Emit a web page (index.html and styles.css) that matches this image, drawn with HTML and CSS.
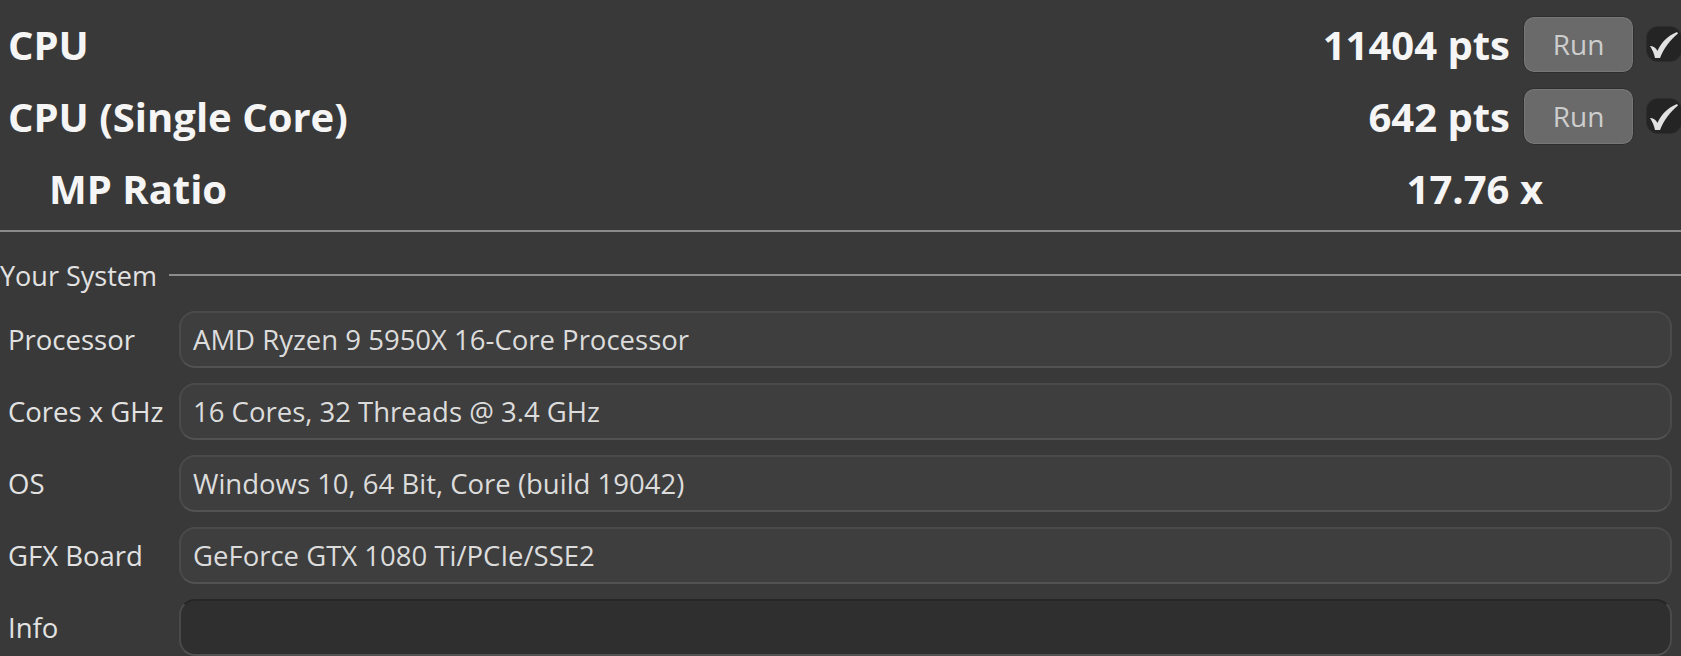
FILE: index.html
```html
<!DOCTYPE html>
<html>
<head>
<meta charset="utf-8">
<link rel="stylesheet" href="styles.css">
</head>
<body>
<div class="app">
  <section class="bench">
    <div class="row">
      <div class="title">CPU</div>
      <div class="score">11404 pts</div>
      <button class="run">Run</button>
      <div class="check"><svg viewBox="0 0 34 34" width="34" height="34"><path d="M3 19 C6 18.5 9 21 10.5 24 C14 16 20 9 30 5 L31 6.5 C23 13 17 21 13 31 L8 31 C7 26 5 22 3 19 Z" fill="#e2e2e2"/></svg></div>
    </div>
    <div class="row">
      <div class="title">CPU (Single Core)</div>
      <div class="score">642 pts</div>
      <button class="run">Run</button>
      <div class="check"><svg viewBox="0 0 34 34" width="34" height="34"><path d="M3 19 C6 18.5 9 21 10.5 24 C14 16 20 9 30 5 L31 6.5 C23 13 17 21 13 31 L8 31 C7 26 5 22 3 19 Z" fill="#e2e2e2"/></svg></div>
    </div>
    <div class="row ratio">
      <div class="title sub">MP Ratio</div>
      <div class="score">17.76 x</div>
    </div>
  </section>
  <hr class="divider">
  <section class="system">
    <div class="group-head"><span>Your System</span><div class="rule"></div></div>
    <div class="field-row"><div class="label">Processor</div><div class="field">AMD Ryzen 9 5950X 16-Core Processor</div></div>
    <div class="field-row"><div class="label">Cores x GHz</div><div class="field">16 Cores, 32 Threads @ 3.4 GHz</div></div>
    <div class="field-row"><div class="label">OS</div><div class="field">Windows 10, 64 Bit, Core (build 19042)</div></div>
    <div class="field-row"><div class="label">GFX Board</div><div class="field">GeForce GTX 1080 Ti/PCIe/SSE2</div></div>
    <div class="field-row"><div class="label">Info</div><div class="field empty"></div></div>
  </section>
</div>
</body>
</html>
```
FILE: styles.css
```css
html, body {
  margin: 0;
  padding: 0;
  background: #393939;
  overflow: hidden;
}
body {
  font-family: "Open Sans", "Noto Sans", sans-serif;
  color: #e6e6e6;
  width: 1681px;
  height: 656px;
}
.bench {
  padding: 16px 0 0 8px;
}
.row {
  display: flex;
  align-items: center;
  height: 56px;
  margin-bottom: 16px;
}
.title {
  flex: 1;
  font-size: 40px;
  font-weight: 700;
  color: #f5f5f5;
}
.title.sub {
  padding-left: 41px;
}
.score {
  font-size: 40px;
  font-weight: 700;
  color: #f5f5f5;
  margin-right: 13px;
}
.ratio .score {
  margin-right: 138px;
}
.run {
  width: 111px;
  height: 57px;
  border: 1px solid #2e2e2e;
  box-shadow: inset 0 0 0 1px #777777;
  border-radius: 11px;
  background: #6a6a6a;
  color: #cdcdcd;
  font-family: "Open Sans", sans-serif;
  font-size: 28px;
  padding: 0 0 0 0;
  margin-right: 13px;
}
.check {
  width: 34px;
  height: 34px;
  background: #242424;
  border-radius: 11px;
  box-shadow: 0 0 0 1px #2e2e2e;
  display: flex;
}
.divider {
  margin: 0;
  border: 0;
  border-top: 2px solid #8a8a8a;
  margin-top: -2px;
}
.system {
  padding: 0 9px 0 0;
}
.group-head {
  display: flex;
  align-items: center;
  height: 46px;
  margin-top: 20px;
  margin-bottom: 13px;
  font-size: 27px;
  color: #e2e2e2;
}
.group-head .rule {
  flex: 1;
  height: 2px;
  background: #8c8c8c;
  margin-left: 12px;
  margin-right: -9px;
}
.field-row {
  display: flex;
  align-items: center;
  height: 57px;
  margin-bottom: 15px;
}
.label {
  width: 171px;
  padding-left: 8px;
  font-size: 27.5px;
  color: #e2e2e2;
}
.field {
  flex: 1;
  height: 57px;
  box-sizing: border-box;
  border: 2px solid #4a4a4a;
  border-bottom-color: #525252;
  border-radius: 16px;
  background: #3e3e3e;
  display: flex;
  align-items: center;
  padding-left: 12px;
  font-size: 27.5px;
  color: #dcdcdc;
}
.field.empty {
  background: #2f2f2f;
  border-top-color: #262626;
}
```
